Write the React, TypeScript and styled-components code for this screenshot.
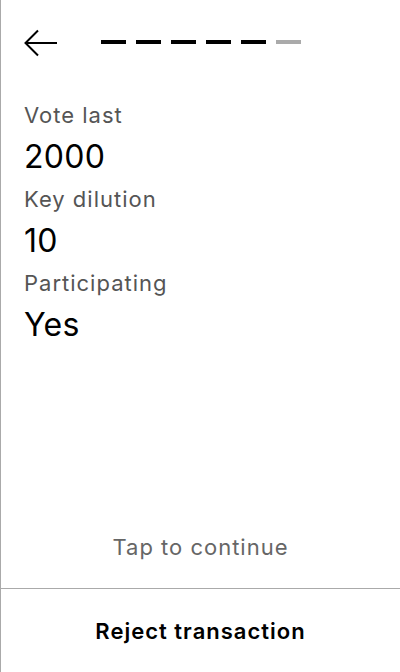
import React from 'react'
import styled, { createGlobalStyle } from 'styled-components'

const GlobalStyle = createGlobalStyle`
  html, body {
    margin: 0;
    padding: 0;
    background: #ffffff;
  }
  body {
    font-family: Inter, "Noto Sans", sans-serif;
    -webkit-font-smoothing: antialiased;
  }
`

const Screen = styled.div`
  display: flex;
  flex-direction: column;
  width: 400px;
  height: 672px;
  box-sizing: border-box;
  border-left: 1px solid #aaaaaa;
  background: #ffffff;
  color: #000000;
`

const Header = styled.div`
  display: flex;
  align-items: center;
  height: 86px;
  padding-left: 22px;
  box-sizing: border-box;
`

const BackButton = styled.button`
  display: flex;
  align-items: center;
  justify-content: center;
  width: 35px;
  height: 28px;
  padding: 0;
  border: none;
  background: none;
  cursor: pointer;
`

const Steps = styled.div`
  display: flex;
  gap: 10px;
  margin-left: 43px;
  margin-bottom: 2px;
`

const Step = styled.span<{ done: boolean }>`
  display: block;
  width: 25px;
  height: 4px;
  background: ${({ done }) => (done ? '#000000' : '#aaaaaa')};
`

const Content = styled.div`
  display: flex;
  flex-direction: column;
  padding: 13px 23px 0;
  flex: 1;
`

const Label = styled.div`
  font-size: 22px;
  line-height: 32px;
  letter-spacing: 1px;
  color: #555555;
`

const Value = styled.div`
  font-size: 32px;
  line-height: 52px;
  letter-spacing: 0.3px;
  color: #000000;
`

const Hint = styled.div`
  text-align: center;
  font-size: 22px;
  line-height: 28px;
  letter-spacing: 1px;
  color: #666666;
  padding-bottom: 27px;
`

const RejectButton = styled.button`
  display: flex;
  align-items: center;
  justify-content: center;
  box-sizing: border-box;
  height: 84px;
  width: 100%;
  border: none;
  border-top: 1px solid #aaaaaa;
  background: none;
  padding: 0;
  font-family: Inter, "Noto Sans", sans-serif;
  font-size: 22px;
  font-weight: 600;
  letter-spacing: 1px;
  color: #000000;
  cursor: pointer;
`

const fields = [
  { label: 'Vote last', value: '2000' },
  { label: 'Key dilution', value: '10' },
  { label: 'Participating', value: 'Yes' },
]

const steps = [true, true, true, true, true, false]

export default function App() {
  return (
    <>
      <GlobalStyle />
      <Screen>
        <Header>
          <BackButton aria-label="Back">
            <svg width="35" height="28" viewBox="0 0 35 28" fill="none">
              <path d="M34 14H2.5M15 1.5L2.5 14L15 26.5" stroke="#000" strokeWidth="2" />
            </svg>
          </BackButton>
          <Steps>
            {steps.map((done, i) => (
              <Step key={i} done={done} />
            ))}
          </Steps>
        </Header>
        <Content>
          {fields.map((f) => (
            <React.Fragment key={f.label}>
              <Label>{f.label}</Label>
              <Value>{f.value}</Value>
            </React.Fragment>
          ))}
        </Content>
        <Hint>Tap to continue</Hint>
        <RejectButton>Reject transaction</RejectButton>
      </Screen>
    </>
  )
}
